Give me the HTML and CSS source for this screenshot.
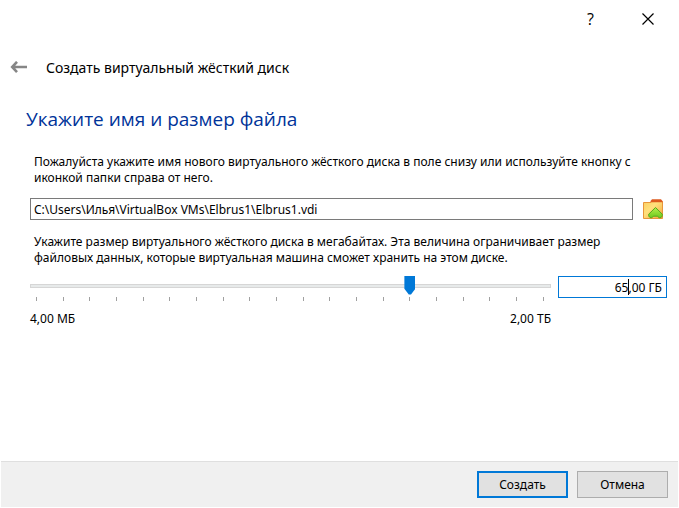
FILE: index.html
```html
<!DOCTYPE html>
<html lang="ru">
<head>
    <meta charset="UTF-8">
    <meta name="viewport" content="width=device-width, initial-scale=1.0">
    <title>Создать виртуальный жёсткий диск</title>
    <link rel="stylesheet" href="styles.css">
</head>
<body>

    <form class="wizard">
        <div class="titlebar">
            <button type="button" class="title-btn" aria-label="Справка">?</button>
            <button type="button" class="title-btn" aria-label="Закрыть">
                <svg width="12" height="12" viewBox="0 0 12 12"><path d="M0.5 0.5L11.5 11.5M11.5 0.5L0.5 11.5" stroke="#000" stroke-width="1.2" fill="none"/></svg>
            </button>
        </div>

        <header class="header">
            <button type="button" class="back" aria-label="Назад">
                <svg width="17" height="15" viewBox="0 0 17 15"><path d="M7 0.8L2.2 6L7 11.2M2.2 6H17" stroke="#868686" stroke-width="2.6" fill="none"/></svg>
            </button>
            <span class="wizard-name">Создать виртуальный жёсткий диск</span>
        </header>

        <main class="page">
            <h1>Укажите имя и размер файла</h1>

            <label class="hint" for="path">Пожалуйста укажите имя нового виртуального жёсткого диска в поле снизу или используйте кнопку с иконкой папки справа от него.</label>
            <div class="path-row">
                <input type="text" id="path" class="path" value="C:\Users\Илья\VirtualBox VMs\Elbrus1\Elbrus1.vdi">
                <button type="button" class="folder" aria-label="Выбрать файл">
                    <svg width="20" height="20" viewBox="0 0 20 20">
                        <defs>
                            <linearGradient id="paper" x1="0" y1="0" x2="1" y2="1">
                                <stop offset="0" stop-color="#fbcf62"/>
                                <stop offset="0.4" stop-color="#ffe07c"/>
                                <stop offset="1" stop-color="#f3a43c"/>
                            </linearGradient>
                            <linearGradient id="leaf" x1="0" y1="0" x2="0" y2="1">
                                <stop offset="0" stop-color="#b4ef4a"/>
                                <stop offset="1" stop-color="#6cc81e"/>
                            </linearGradient>
                        </defs>
                        <path d="M0.5 3.5H8L9 2.5H19.5V19.5H0.5z" fill="url(#paper)" stroke="#e8963a"/>
                        <path d="M7.5 3.2V2L9 0.3H18L19.5 2V3.2z" fill="#dd5a1e"/>
                        <path d="M12.5 8.5L19.3 15.2C19.6 17 18.6 18.8 17 18.8C15.8 18.8 15 18 14.6 17.2H10.4C10 18 9.2 18.8 8 18.8C6.4 18.8 5.3 17 5.7 15.2z" fill="url(#leaf)" stroke="#56a81c"/>
                    </svg>
                </button>
            </div>

            <label class="hint" for="size">Укажите размер виртуального жёсткого диска в мегабайтах. Эта величина ограничивает размер файловых данных, которые виртуальная машина сможет хранить на этом диске.</label>
            <div class="size-row">
                <div class="scale">
                    <input type="range" id="size" class="slider" min="0" max="1000" value="735">
                    <div class="ticks">
                        <i></i><i></i><i></i><i></i><i></i><i></i><i></i><i></i><i></i><i></i>
                        <i></i><i></i><i></i><i></i><i></i><i></i><i></i><i></i><i></i><i></i>
                    </div>
                    <div class="limits">
                        <span>4,00 МБ</span>
                        <span>2,00 ТБ</span>
                    </div>
                </div>
                <div class="size-box">
                    <input type="text" class="size-value" aria-label="Размер" value="65,00 ГБ">
                    <span class="caret"></span>
                </div>
            </div>
        </main>

        <footer class="footer">
            <button type="submit" class="btn primary">Создать</button>
            <button type="button" class="btn">Отмена</button>
        </footer>
    </form>

</body>
</html>
```

FILE: styles.css
```css
* {
    box-sizing: border-box;
}

body {
    margin: 0;
    background: #fff;
    color: #000;
    font-family: "Noto Sans", "Open Sans", sans-serif;
    font-size: 12px;
    line-height: 16px;
}

button, input {
    font: inherit;
    color: inherit;
    margin: 0;
    padding: 0;
}

button svg {
    display: block;
}

.wizard {
    display: flex;
    flex-direction: column;
    min-height: 100vh;
    padding: 0 1px 1px;
}

.titlebar {
    display: flex;
    justify-content: flex-end;
    height: 38px;
    padding-right: 2px;
}

.title-btn {
    display: flex;
    align-items: center;
    justify-content: center;
    width: 57px;
    border: none;
    background: none;
    font-family: "Open Sans", sans-serif;
    font-size: 16px;
}

.header {
    display: flex;
    align-items: center;
    gap: 19px;
    height: 60px;
    padding-left: 9px;
}

.back {
    border: none;
    background: none;
}

.wizard-name {
    font-size: 14px;
    line-height: 20px;
}

.page {
    flex: 1;
    padding: 8px 11px 16px 29px;
}

h1 {
    margin: 0 0 22px -4px;
    color: #003399;
    font-family: "Open Sans", sans-serif;
    font-size: 19px;
    font-weight: normal;
    line-height: 26px;
}

.hint {
    display: block;
    padding: 0 16px 0 4px;
}

.path-row {
    display: flex;
    align-items: center;
    gap: 10px;
    margin: 12px 4px 14px 0;
}

.path {
    flex: 1;
    height: 22px;
    padding: 0 3px;
    border: 1px solid #7a7a7a;
    background: #fff;
}

.folder {
    border: none;
    background: none;
}

.size-row {
    display: flex;
    gap: 7px;
    margin-top: 10px;
}

.scale {
    flex: 1;
}

.slider {
    display: block;
    width: 100%;
    height: 19px;
    background: none;
    appearance: none;
}

.slider::-webkit-slider-runnable-track {
    height: 4px;
    border: 1px solid #d6d6d6;
    background: #e7eaea;
}

.slider::-webkit-slider-thumb {
    width: 11px;
    height: 19px;
    margin-top: -9px;
    background: #0078d7;
    clip-path: polygon(0 0, 100% 0, 100% 70%, 60% 100%, 40% 100%, 0 70%);
    appearance: none;
}

.ticks {
    display: flex;
    justify-content: space-between;
    padding: 2px 7px 0 6px;
}

.ticks i {
    width: 1px;
    height: 4px;
    background: #a0a0a0;
}

.limits {
    display: flex;
    justify-content: space-between;
    margin-top: 10px;
}

.size-box {
    position: relative;
    width: 109px;
}

.size-value {
    display: block;
    width: 100%;
    height: 22px;
    padding: 0 4px;
    border: 1px solid #0078d7;
    background: #fff;
    text-align: right;
}

.caret {
    position: absolute;
    top: 3px;
    right: 38px;
    width: 1px;
    height: 16px;
    background: #000;
}

.footer {
    display: flex;
    justify-content: flex-end;
    gap: 9px;
    padding: 9px 10px;
    border-top: 1px solid #dfdfdf;
    background: #f0f0f0;
}

.btn {
    width: 91px;
    height: 27px;
    border: 1px solid #adadad;
    background: #e1e1e1;
}

.primary {
    border: 2px solid #0078d7;
}
```
